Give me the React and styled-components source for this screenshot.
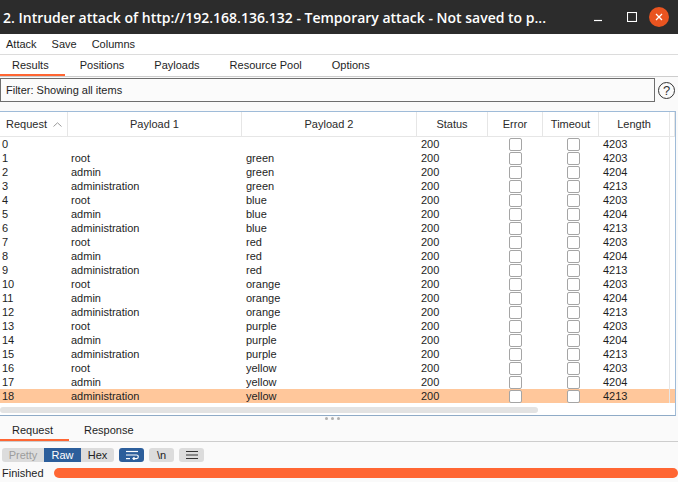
import React from 'react';
import styled, { createGlobalStyle } from 'styled-components';

const GlobalStyle = createGlobalStyle`
  html, body {
    margin: 0;
    padding: 0;
    background: #fafafa;
  }
  body {
    font-family: "Liberation Sans", Arial, sans-serif;
    font-size: 11px;
    color: #1e1e1e;
  }
`;

const Window = styled.div`
  width: 678px;
  height: 482px;
  display: flex;
  flex-direction: column;
  overflow: hidden;
  background: #fafafa;
`;

const TitleBar = styled.div`
  height: 34px;
  flex: none;
  background: #2c2c2c;
  display: flex;
  align-items: center;
  padding-left: 3px;
`;

const Title = styled.div`
  flex: 1;
  color: #fff;
  font-family: "Open Sans", "DejaVu Sans", sans-serif;
  font-weight: 600;
  font-size: 14px;
  white-space: nowrap;
  overflow: hidden;
`;

const WinControls = styled.div`
  display: flex;
  align-items: center;
  padding-right: 9px;
`;

const WinButton = styled.div`
  width: 34px;
  height: 34px;
  display: flex;
  align-items: center;
  justify-content: center;
`;

const CloseDot = styled.div`
  width: 20px;
  height: 20px;
  border-radius: 50%;
  background: #e95420;
  display: flex;
  align-items: center;
  justify-content: center;
`;

const MenuBar = styled.div`
  height: 20px;
  flex: none;
  display: flex;
  align-items: center;
  gap: 15px;
  padding-left: 6px;
  background: #fff;
  border-bottom: 1px solid #dcdcdc;
`;

const TabBar = styled.div`
  height: 21px;
  flex: none;
  display: flex;
  border-bottom: 1px solid #cdcdcd;
  background: #fff;
`;

const Tab = styled.div`
  padding: 0 15px;
  display: flex;
  align-items: center;
  box-sizing: border-box;
  border-bottom: 2px solid ${(p) => (p.$active ? '#ff6633' : 'transparent')};
  &:first-child {
    padding-left: 12px;
    padding-right: 16px;
  }
`;

const FilterRow = styled.div`
  flex: none;
  display: flex;
  align-items: center;
  padding-top: 1px;
  margin-bottom: 9px;
`;

const FilterBox = styled.div`
  width: 655px;
  height: 24px;
  box-sizing: border-box;
  border: 1px solid #6e6e6e;
  background: #fbfbfb;
  display: flex;
  align-items: center;
  padding-left: 5px;
`;

const HelpIcon = styled.div`
  margin-left: 3px;
  width: 17px;
  height: 17px;
  box-sizing: border-box;
  border: 1px solid #333;
  border-radius: 50%;
  display: flex;
  align-items: center;
  justify-content: center;
  font-size: 13px;
  color: #333;
`;

const TablePanel = styled.div`
  flex: none;
  width: 676px;
  height: 305px;
  box-sizing: border-box;
  background: #fff;
  border-top: 1px solid #9fbbd8;
  border-right: 1px solid #9fbbd8;
  border-bottom: 1px solid #8fabc7;
  display: flex;
  flex-direction: column;
`;

const cols = '68px 174px 175px 71px 55px 56px 71px 1fr';

const HeaderRow = styled.div`
  display: grid;
  grid-template-columns: ${cols};
  height: 24px;
  border-bottom: 1px solid #e6e6e6;
`;

const HeaderCell = styled.div`
  display: flex;
  align-items: center;
  justify-content: ${(p) => (p.$left ? 'flex-start' : 'center')};
  padding-left: ${(p) => (p.$left ? '6px' : '0')};
  gap: 6px;
  color: #2a2a2a;
  border-right: 1px solid #e6e6e6;
`;

const Rows = styled.div`
  flex: none;
`;

const Row = styled.div`
  display: grid;
  grid-template-columns: ${cols};
  height: 14px;
  line-height: 14px;
  background: ${(p) => (p.$selected ? '#ffc79b' : 'transparent')};
`;

const Cell = styled.div`
  padding-left: ${(p) => p.$pad ?? 3}px;
  white-space: nowrap;
  overflow: hidden;
  display: flex;
  align-items: center;
  justify-content: ${(p) => (p.$center ? 'center' : 'flex-start')};
  border-right: ${(p) => (p.$edge ? '1px solid #e6e6e6' : 'none')};
`;

const Check = styled.div`
  width: 13px;
  height: 13px;
  box-sizing: border-box;
  border: 1px solid #a5a5a5;
  border-radius: 2px;
  background: #fff;
`;

const ScrollTrack = styled.div`
  padding-top: 4px;
`;

const ScrollThumb = styled.div`
  width: 538px;
  height: 6px;
  border-radius: 3px;
  background: #e3e3e3;
`;

const Handle = styled.div`
  height: 5px;
  flex: none;
  display: flex;
  justify-content: center;
  align-items: center;
  gap: 3px;
  padding-right: 14px;
`;

const Dot = styled.span`
  width: 3px;
  height: 3px;
  border-radius: 50%;
  background: #b0b0b0;
`;

const BottomTabs = styled(TabBar)`
  height: 20px;
  background: transparent;
`;

const Toolbar = styled.div`
  display: flex;
  align-items: center;
  margin-top: 6px;
  padding-left: 2px;
  height: 14px;
`;

const Group = styled.div`
  display: flex;
  margin-right: ${(p) => p.$gap || 0}px;
`;

const TBtn = styled.div`
  width: ${(p) => p.$w}px;
  height: 14px;
  display: flex;
  align-items: center;
  justify-content: center;
  background: ${(p) => (p.$on ? '#2c5e9b' : '#dcdcdc')};
  color: ${(p) => (p.$on ? '#fff' : p.$dim ? '#9c9c9c' : '#222')};
  font-size: 11px;
  &:first-child {
    border-radius: 3px 0 0 3px;
  }
  &:last-child {
    border-radius: 0 3px 3px 0;
  }
  &:only-child {
    border-radius: 3px;
  }
`;

const StatusRow = styled.div`
  display: flex;
  align-items: center;
  height: 14px;
  margin-top: 4px;
  padding-left: 2px;
`;

const Progress = styled.div`
  margin-left: 10px;
  width: 624px;
  height: 10px;
  border-radius: 5px;
  background: #ff6633;
`;

const words = ['green', 'blue', 'red', 'orange', 'purple', 'yellow'];
const users = [
  ['root', '4203'],
  ['admin', '4204'],
  ['administration', '4213'],
];

const rows = [{ id: 0, p1: '', p2: '', len: '4203' }];
words.forEach((w) => {
  users.forEach(([u, len]) => {
    rows.push({ id: rows.length, p1: u, p2: w, len });
  });
});

function WrapIcon() {
  return (
    <svg width="14" height="10" viewBox="0 0 14 10" fill="none" stroke="#fff" strokeWidth="1.2">
      <path d="M1 1.5h12" />
      <path d="M1 5h10.5a1.8 1.8 0 0 1 0 3.6H8" />
      <path d="M9.5 7.2 8 8.6 9.5 10" />
      <path d="M1 8.6h4" />
    </svg>
  );
}

function MenuIcon() {
  return (
    <svg width="12" height="10" viewBox="0 0 12 10" stroke="#333" strokeWidth="1.2">
      <path d="M0 1.5h12M0 5h12M0 8.5h12" />
    </svg>
  );
}

export default function App() {
  return (
    <Window>
      <GlobalStyle />
      <TitleBar>
        <Title>2. Intruder attack of http://192.168.136.132 - Temporary attack - Not saved to p...</Title>
        <WinControls>
          <WinButton>
            <svg width="10" height="10" viewBox="0 0 10 10">
              <path d="M1 8.5h8" stroke="#fff" strokeWidth="1.2" />
            </svg>
          </WinButton>
          <WinButton>
            <svg width="10" height="10" viewBox="0 0 10 10" fill="none">
              <rect x="0.5" y="0.5" width="9" height="9" stroke="#fff" strokeWidth="1.1" />
            </svg>
          </WinButton>
          <CloseDot>
            <svg width="8" height="8" viewBox="0 0 8 8">
              <path d="M1 1l6 6M7 1L1 7" stroke="#fff" strokeWidth="1.3" />
            </svg>
          </CloseDot>
        </WinControls>
      </TitleBar>

      <MenuBar>
        <span>Attack</span>
        <span>Save</span>
        <span>Columns</span>
      </MenuBar>

      <TabBar>
        <Tab $active>Results</Tab>
        <Tab>Positions</Tab>
        <Tab>Payloads</Tab>
        <Tab>Resource Pool</Tab>
        <Tab>Options</Tab>
      </TabBar>

      <FilterRow>
        <FilterBox>Filter: Showing all items</FilterBox>
        <HelpIcon>?</HelpIcon>
      </FilterRow>

      <TablePanel>
        <HeaderRow>
          <HeaderCell $left>
            Request
            <svg width="9" height="5" viewBox="0 0 9 5" fill="none">
              <path d="M0.5 4.5 4.5 0.8 8.5 4.5" stroke="#9a9a9a" />
            </svg>
          </HeaderCell>
          <HeaderCell>Payload 1</HeaderCell>
          <HeaderCell>Payload 2</HeaderCell>
          <HeaderCell>Status</HeaderCell>
          <HeaderCell>Error</HeaderCell>
          <HeaderCell>Timeout</HeaderCell>
          <HeaderCell>Length</HeaderCell>
          <HeaderCell />
        </HeaderRow>
        <Rows>
          {rows.map((r) => (
            <Row key={r.id} $selected={r.id === 18}>
              <Cell $pad={2}>{r.id}</Cell>
              <Cell>{r.p1}</Cell>
              <Cell $pad={4}>{r.p2}</Cell>
              <Cell $pad={4}>200</Cell>
              <Cell $center $pad={0}>
                <Check />
              </Cell>
              <Cell $center $pad={4}>
                <Check />
              </Cell>
              <Cell $pad={4} $edge>
                {r.len}
              </Cell>
              <Cell />
            </Row>
          ))}
        </Rows>
        <ScrollTrack>
          <ScrollThumb />
        </ScrollTrack>
      </TablePanel>

      <Handle>
        <Dot />
        <Dot />
        <Dot />
      </Handle>

      <BottomTabs>
        <Tab $active>Request</Tab>
        <Tab>Response</Tab>
      </BottomTabs>

      <Toolbar>
        <Group $gap={5}>
          <TBtn $w={42} $dim>Pretty</TBtn>
          <TBtn $w={37} $on>Raw</TBtn>
          <TBtn $w={33}>Hex</TBtn>
        </Group>
        <Group $gap={5}>
          <TBtn $w={25} $on>
            <WrapIcon />
          </TBtn>
        </Group>
        <Group $gap={5}>
          <TBtn $w={25}>\n</TBtn>
        </Group>
        <Group>
          <TBtn $w={25}>
            <MenuIcon />
          </TBtn>
        </Group>
      </Toolbar>

      <StatusRow>
        <span>Finished</span>
        <Progress />
      </StatusRow>
    </Window>
  );
}
